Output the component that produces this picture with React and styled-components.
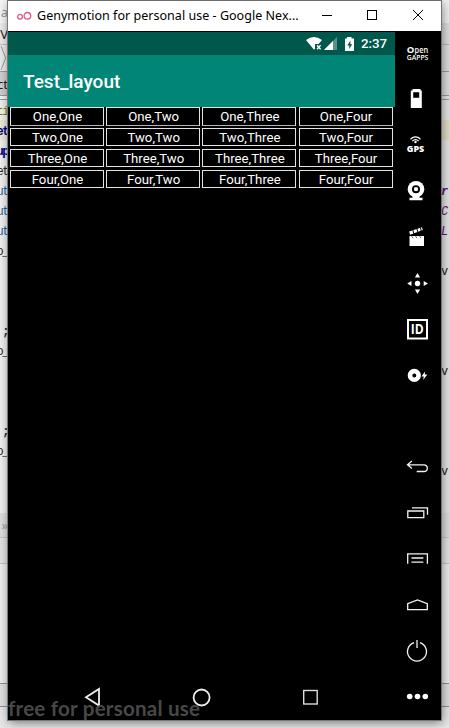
import React from 'react';
import styled, { createGlobalStyle } from 'styled-components';

const GlobalStyle = createGlobalStyle`
  * { box-sizing: border-box; }
  body { margin: 0; overflow: hidden; background: #ececec; }
`;

const Desktop = styled.div`
  display: grid;
  grid-template-columns: 8px 433px 8px;
  width: 449px;
  height: 728px;
  overflow: hidden;
  background: #ececec;
`;

const Strip = styled.div`
  display: flex;
  flex-direction: column;
  min-width: 0;
  overflow: hidden;
  background: #ececec;
`;

const Band = styled.div`
  flex: none;
  display: flex;
  align-items: center;
  justify-content: ${(p) => (p.$right ? 'flex-start' : 'flex-end')};
  height: ${(p) => p.$h}px;
  padding-top: ${(p) => (p.$code ? 4 : 0)}px;
  background: ${(p) => p.$bg || '#efefef'};
  border-bottom: ${(p) => (p.$line ? `1px solid ${p.$line}` : '0')};
  color: ${(p) => p.$color || '#222'};
  font: ${(p) => (p.$bold ? 'bold' : 'normal')} ${(p) => (p.$code ? 12 : 13)}px/16px
    ${(p) => (p.$code ? '"Liberation Mono", monospace' : '"Noto Sans", sans-serif')};
  font-style: ${(p) => (p.$italic ? 'italic' : 'normal')};
  letter-spacing: ${(p) => (p.$code && !p.$right ? -1.5 : 0)}px;
  white-space: pre;
  overflow: hidden;
`;

const Window = styled.main`
  position: relative;
  display: flex;
  flex-direction: column;
  height: 720px;
  background: #000;
  border-top: 1px solid #6d6d6d;
  box-shadow: 0 0 0 1px #777, 1px 3px 10px rgba(0, 0, 0, 0.5);
`;

const TitleBar = styled.header`
  display: flex;
  align-items: center;
  flex: none;
  height: 30px;
  padding-left: 8px;
  background: #fff;
`;

const WindowTitle = styled.div`
  flex: none;
  width: 269px;
  margin-left: 5px;
  color: #000;
  font: 12.5px/20px "Noto Sans", sans-serif;
  letter-spacing: 0.03px;
  white-space: nowrap;
`;

const Controls = styled.div`
  display: flex;
`;

const Body = styled.div`
  display: flex;
  flex: 1;
  min-height: 0;
`;

const Phone = styled.section`
  display: flex;
  flex-direction: column;
  width: 387px;
  padding-top: 1px;
  background: #000;
`;

const StatusBar = styled.div`
  display: flex;
  align-items: center;
  justify-content: flex-end;
  flex: none;
  height: 23px;
  padding-right: 8px;
  background: #00574b;
`;

const Clock = styled.span`
  width: 26px;
  margin-left: 6px;
  color: #fff;
  font: 500 13.3px/23px Roboto, sans-serif;
  white-space: nowrap;
`;

const AppBar = styled.div`
  display: flex;
  align-items: center;
  flex: none;
  height: 52px;
  padding: 2px 0 0 15px;
  background: #008577;
  color: #fff;
  font: 500 19px/24px Roboto, sans-serif;
`;

const Table = styled.div`
  display: grid;
  grid-template-columns: repeat(4, 94px);
  grid-auto-rows: 18px;
  column-gap: 2.2px;
  row-gap: 3px;
  padding-left: 2px;
`;

const Cell = styled.div`
  height: ${(p) => (p.$first ? 19 : 18)}px;
  border: 1px solid #e4e4e4;
  border-bottom-color: ${(p) => (p.$first ? '#b4b4b4' : '#e4e4e4')};
  padding-left: 1px;
  color: #fff;
  font: 13.2px/18px Roboto, sans-serif;
  text-align: center;
  white-space: nowrap;
`;

const NavBar = styled.nav`
  display: flex;
  align-items: center;
  justify-content: space-between;
  height: 46px;
  margin-top: auto;
  padding: 0 73px;
`;

const Sidebar = styled.aside`
  display: flex;
  flex-direction: column;
  width: 46px;
  margin-top: -1px;
`;

const Tool = styled.svg`
  display: block;
  flex: none;
  width: 46px;
  height: 46px;
  fill: ${(p) => (p.$line ? 'none' : '#fff')};
  stroke: ${(p) => (p.$line ? '#f4f4f4' : 'none')};
  stroke-width: 1.3;
`;

const Icon = styled.svg`
  display: block;
  flex: none;
`;

const Watermark = styled.div`
  position: absolute;
  left: 0;
  bottom: -1px;
  color: #484848;
  font: 700 20.6px/26px Lato, sans-serif;
  letter-spacing: 0.2px;
  white-space: nowrap;
  pointer-events: none;
`;

const codeLine = (text, color, extra = {}) => ({ h: 20, text, color, code: true, ...extra });
const navy = '#000080';

const footerBands = [
  { h: 25, bg: '#dedede', line: '#c4c4c4' },
  { h: 26, bg: '#e4e4e4', line: '#c4c4c4' },
  { h: 120, bg: '#ededed', line: '#8f8f8f' },
  { h: 23, bg: '#dfdfdf', line: '#8f8f8f' },
  { h: 22, bg: '#e8e8e8' },
];

const leftBands = [
  { h: 23, bg: '#f5f5f5', text: 'a', color: '#999' },
  { h: 22, bg: '#ebebeb', line: '#c3c3c3', text: 'V' },
  { h: 27, bg: '#ebebeb', line: '#999', chevron: true },
  { h: 24, bg: '#cfcfcf', line: '#999', text: 'ct' },
  { h: 4, bg: '#f4f4f4', line: '#999' },
  codeLine('ti', '#808000'),
  { ...codeLine('et', navy, { bold: true }), bg: '#efe9d6' },
  codeLine('up', navy, { bold: true }),
  codeLine('et', '#222'),
  codeLine('ut', '#235fa0'),
  codeLine('ut', '#235fa0'),
  codeLine('ut', '#235fa0'),
  codeLine('o_', '#222'),
  codeLine(''), codeLine(''), codeLine(''),
  codeLine(';', '#222', { bold: true }),
  codeLine('o_', '#222'),
  codeLine(''), codeLine(''), codeLine(''),
  codeLine(';', '#222', { bold: true }),
  codeLine('o_', '#222'),
  { h: 53 },
  { ...footerBands[0], text: '»', color: '#999' },
  ...footerBands.slice(1),
];

const rightBands = [
  { h: 23, bg: '#f0f0f0' },
  { h: 22, bg: '#dedede', line: '#b8b8b8' },
  { h: 27, bg: '#dedede', line: '#999' },
  { h: 24, bg: '#dedede', line: '#999' },
  { h: 4, bg: '#e4e4e4', line: '#999' },
  codeLine(''),
  { h: 20, bg: '#e3dcc8' },
  codeLine(''), codeLine(''),
  codeLine('r', '#660e7a', { bold: true, italic: true }),
  codeLine('C', '#660e7a', { italic: true }),
  codeLine('L', '#660e7a', { italic: true }),
  codeLine(''),
  codeLine('v', '#222'),
  { h: 80 },
  codeLine('v', '#222'),
  { h: 80 },
  codeLine('v', '#222'),
  { h: 33 },
  ...footerBands,
];

function Backdrop({ bands, right }) {
  return (
    <Strip>
      {bands.map((b, i) => (
        <Band key={i} $h={b.h} $bg={b.bg || (right ? '#e5e5e5' : '#f0f0f0')} $line={b.line} $color={b.color}
          $code={b.code} $bold={b.bold} $italic={b.italic} $right={right}>
          {b.chevron && (
            <Icon width="8" height="26" fill="none" stroke="#999"><path d="M1 1 L5.7 13 L1 25" /></Icon>
          )}
          {b.text}
        </Band>
      ))}
    </Strip>
  );
}

// Tool drawings share a 46px slot with the origin at its optical centre.
const tools = [
  { art: (
    <g fontFamily="Open Sans, sans-serif">
      <text x="-10.8" y="-0.3" fontSize="9.5" fontWeight="700">O</text>
      <text x="-2.9" y="-0.3" fontSize="9.3" fontWeight="600" textLength="13.5" lengthAdjust="spacingAndGlyphs">pen</text>
      <text x="-10.7" y="7.2" fontSize="6.6" fontWeight="600" textLength="21.5" lengthAdjust="spacingAndGlyphs">GAPPS</text>
    </g>
  ) },
  { art: <path fillRule="evenodd" d="M-5 -10H3V-8.5H4.3V9H-6.7V-8.5H-5ZM-4.3 -6.8V-1.3H1.7V-6.8Z" /> },
  { art: (
    <g>
      <g fill="none" stroke="#fff" strokeWidth="1.2">
        <path d="M-7 -5.8Q-2 -10.4 3 -5.8" /><path d="M-5.2 -3.9Q-2 -6.8 1.2 -3.9" />
      </g>
      <circle cx="-2" cy="-3" r="1.2" />
      <text x="-10.7" y="6.7" fontFamily="Open Sans, sans-serif" fontSize="7.8" fontWeight="800" textLength="17.4" lengthAdjust="spacingAndGlyphs">GPS</text>
    </g>
  ) },
  { art: (
    <g>
      <circle cx="-1.5" cy="-1.8" r="8.3" />
      <circle cx="-1.5" cy="-1.8" r="3.1" fill="none" stroke="#000" strokeWidth="1.9" />
      <path d="M-5 5H2V6.7H5V9.2H-8V6.7H-5Z" />
    </g>
  ) },
  { art: (
    <g>
      <path d="M-8 -1H6.5V9H-8Z" />
      <path d="M-8.3 -5.4L4.4 -9.8L5.3 -7L-7.4 -2.2Z" />
      <path d="M-4.7 -7L-3.7 -3.3M-0.7 -8.4L0.4 -4.8M2.8 -9.6L3.8 -6" stroke="#000" strokeWidth="1" />
      <path d="M-6 -1L-4.5 1.2M-2 -1L-.5 1.2M2 -1L3.5 1.2" stroke="#000" strokeWidth=".6" />
    </g>
  ) },
  { art: (
    <g>
      <circle cx="0" cy=".5" r="2.7" />
      <path d="M0 -10L2.6 -5.6H-2.6ZM0 11L2.6 6.6H-2.6ZM-10.3 .5L-6 -2.1V3.1ZM10.5 .5L6.2 -2.1V3.1Z" />
    </g>
  ) },
  { art: (
    <g>
      <rect x="-9.5" y="-9" width="19" height="18.5" fill="none" stroke="#fff" strokeWidth="2" />
      <text x="-6.7" y="5.3" fontFamily="Open Sans, sans-serif" fontSize="14" fontWeight="700" textLength="13" lengthAdjust="spacingAndGlyphs">ID</text>
    </g>
  ) },
  { art: (
    <g>
      <circle cx="-3.2" cy=".4" r="4.3" fill="none" stroke="#fff" strokeWidth="4.6" />
      <path d="M7.7 -3.8L4 1.5H6.3L5.6 5L9.8 -.6H7.2Z" />
    </g>
  ) },
  { art: null },
  { line: true, art: <path d="M-5.6 -6L-10 -2.2L-5.6 1.6M-10 -2.2H6.2Q9.8 -2.2 9.8 1.2T6.2 4.5H-.8" /> },
  { line: true, art: <path d="M-9.7 -2H6.3V4.7H-9.7ZM-5.5 -5.2H10V1.8" /> },
  { line: true, art: <path d="M-9.8 4.8V-5.2H9.9V4.8M-6 -1H5.8M-6 3.2H5.8" /> },
  { line: true, art: <path d="M-9.8 4.7V-1.3L0 -5.1L9.8 -1.3V4.7Z" /> },
  { line: true, art: <path d="M-3.5 -8.4A9.5 9.5 0 1 0 2.5 -8.4M-.5 -11V-3" /> },
  { art: <g><circle cx="-7.8" cy="-.5" r="2.8" /><circle cx="0" cy="-.5" r="2.8" /><circle cx="7.8" cy="-.5" r="2.8" /></g> },
];

const names = ['One', 'Two', 'Three', 'Four'];

export default function App() {
  return (
    <>
      <GlobalStyle />
      <Desktop>
        <Backdrop bands={leftBands} />
        <Window>
          <TitleBar>
            <Icon width="16" height="12" fill="none" stroke="#e0568b" strokeWidth="1.3">
              <circle cx="4" cy="6.8" r="2.4" /><circle cx="11.4" cy="5.8" r="3.3" />
            </Icon>
            <WindowTitle>Genymotion for personal use - Google Nex...</WindowTitle>
            <Controls>
              <Icon width="135" height="30" fill="none" stroke="#000" strokeWidth="1">
                <path d="M16 14.5H26" />
                <rect x="61.5" y="9.5" width="9" height="9" />
                <path d="M107 9L117 19M117 9L107 19" />
              </Icon>
            </Controls>
          </TitleBar>
          <Body>
            <Phone>
              <StatusBar>
                <Icon width="50" height="16" fill="#fff">
                  <path d="M1 4Q9 -1.8 17 4L13.6 8H10V12.4L9 13.8Z" />
                  <path d="M12 9.3L15.6 13.3M15.6 9.3L12 13.3" stroke="#fff" strokeWidth="1.3" />
                  <path d="M32 1V14H19Z" opacity=".35" />
                  <path d="M28 5V14H19Z" />
                  <path fillRule="evenodd" d="M42 1H46.5V2.5H49V15H40V2.5H42ZM45.5 4.5L42.3 9.4H44.3V13L47.2 8.2H45.4Z" />
                </Icon>
                <Clock>2:37</Clock>
              </StatusBar>
              <AppBar>Test_layout</AppBar>
              <Table>
                {names.flatMap((row, r) => names.map((col) => (
                  <Cell key={row + col} $first={r === 0}>{row},{col}</Cell>
                )))}
              </Table>
              <NavBar>
                <Icon width="24" height="24" fill="none" stroke="#eee" strokeWidth="1.8">
                  <path d="M18 4V20.5L5 12.3Z" />
                </Icon>
                <Icon width="24" height="24" fill="none" stroke="#eee" strokeWidth="1.8">
                  <circle cx="11.6" cy="12.5" r="8" />
                </Icon>
                <Icon width="24" height="24" fill="none" stroke="#ddd" strokeWidth="1.4">
                  <rect x="5.7" y="5.5" width="13.5" height="13.5" />
                </Icon>
              </NavBar>
            </Phone>
            <Sidebar>
              {tools.map((t, i) => (
                <Tool key={i} viewBox="-22.5 -23 46 46" $line={t.line}>{t.art}</Tool>
              ))}
            </Sidebar>
          </Body>
          <Watermark>free for personal use</Watermark>
        </Window>
        <Backdrop bands={rightBands} right />
      </Desktop>
    </>
  );
}
